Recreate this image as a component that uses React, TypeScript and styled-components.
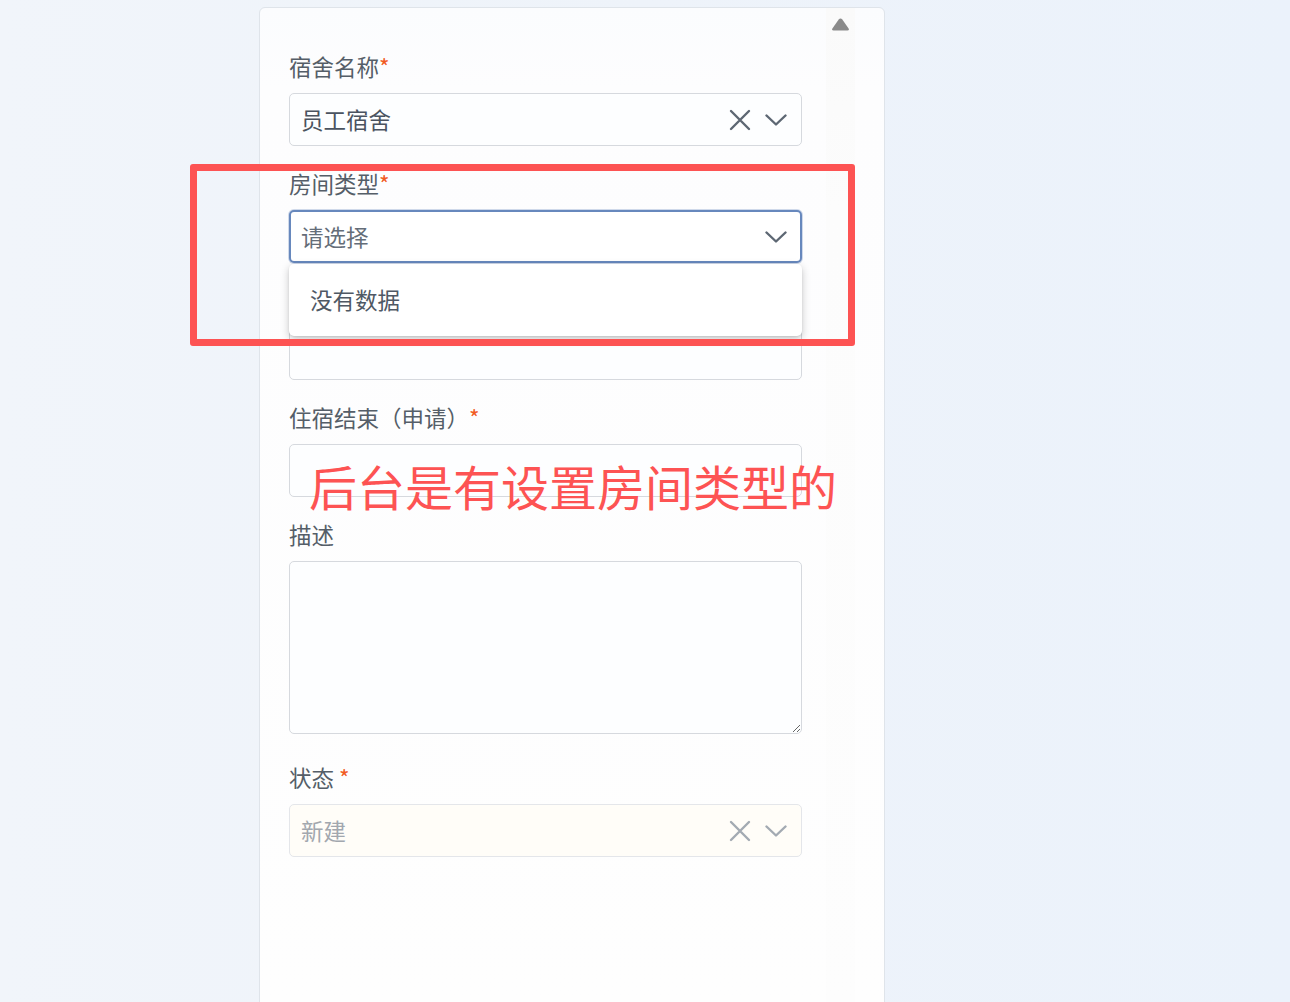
import React from "react";
import styled, { createGlobalStyle } from "styled-components";

const Global = createGlobalStyle`
  html, body { margin: 0; padding: 0; }
  body {
    background: linear-gradient(90deg, #f1f5fa 0%, #eef3fa 50%, #ebf2fb 100%);
    font-family: "Noto Sans CJK SC", "Noto Sans", sans-serif;
    height: 1002px;
    overflow: hidden;
  }
`;

const Page = styled.div`
  position: relative;
  padding: 7px 0 0 259px;
  height: 995px;
`;

const Card = styled.div`
  position: relative;
  box-sizing: border-box;
  width: 626px;
  min-height: 1010px;
  background: linear-gradient(180deg, #fbfcfe 0px, #fdfdfe 80px, #fefefe 100%);
  border: 1px solid #dfe4ea;
  border-radius: 6px;
  padding: 45px 0 0 29px;
`;

const ScrollTrack = styled.div`
  position: absolute;
  top: 0;
  right: 29px;
  width: 29px;
  height: 100%;
  background: linear-gradient(180deg, #fafafa 0px, #fcfcfc 200px, #fdfdfd 100%);
  display: flex;
  justify-content: center;
  padding-top: 9px;
  box-sizing: border-box;
`;

const Form = styled.div`
  width: 513px;
  display: flex;
  flex-direction: column;
`;

const Field = styled.div<{ $mb?: number }>`
  position: relative;
  display: flex;
  flex-direction: column;
  margin-bottom: ${(p) => p.$mb ?? 24}px;
`;

const Label = styled.div<{ $covered?: boolean }>`
  height: 30px;
  line-height: 27px;
  font-size: 22.5px;
  color: #555e68;
  margin-bottom: 10px;
  white-space: nowrap;
  visibility: ${(p) => (p.$covered ? "hidden" : "visible")};
`;

const Star = styled.span`
  color: #f15a22;
`;

const Select = styled.div<{ $focus?: boolean; $disabled?: boolean }>`
  box-sizing: border-box;
  height: 53px;
  display: flex;
  align-items: center;
  border-radius: 5px;
  border: ${(p) => (p.$focus ? "2px solid #6788bd" : "1px solid #d6d9de")};
  padding-left: ${(p) => (p.$focus ? 10 : 11)}px;
  padding-right: ${(p) => (p.$focus ? 13 : 14)}px;
  background: ${(p) => (p.$disabled ? "#fffdf8" : p.$focus ? "#ffffff" : "#fdfeff")};
  border-color: ${(p) => (p.$disabled ? "#e4e6ea" : undefined)};
  box-shadow: ${(p) => (p.$focus ? "0 0 0 1px rgba(103,136,189,0.3)" : "none")};
`;

const Value = styled.div<{ $tone?: "value" | "placeholder" | "disabled" }>`
  flex: 1;
  font-size: 22.5px;
  line-height: 30px;
  padding-bottom: 2px;
  color: ${(p) =>
    p.$tone === "placeholder" ? "#646d78" : p.$tone === "disabled" ? "#a2a7ae" : "#4a5360"};
`;

const Icons = styled.div`
  display: flex;
  align-items: center;
  gap: 14px;
`;

const Input = styled.div`
  box-sizing: border-box;
  height: 53px;
  border: 1px solid #d6d9de;
  border-radius: 5px;
  background: #fdfeff;
`;

const TextArea = styled.textarea`
  box-sizing: border-box;
  display: block;
  width: 513px;
  height: 173px;
  border: 1px solid #d6d9de;
  border-radius: 5px;
  background: #fdfeff;
  resize: vertical;
  font-family: inherit;
  font-size: 22px;
  margin: 0;
`;

const Dropdown = styled.div`
  position: absolute;
  left: 0;
  top: 94px;
  width: 513px;
  height: 72px;
  box-sizing: border-box;
  background: #ffffff;
  border-radius: 5px;
  box-shadow: 0 3px 8px rgba(0, 0, 0, 0.22), 0 1px 2px rgba(0, 0, 0, 0.08);
  display: flex;
  align-items: center;
  padding: 0 0 3px 21px;
  font-size: 22.5px;
  color: #4f5864;
  z-index: 5;
`;

const RedBox = styled.div`
  position: absolute;
  left: 190px;
  top: 164px;
  width: 665px;
  height: 182px;
  box-sizing: border-box;
  border: 7px solid #fd5353;
  border-radius: 3px;
  z-index: 10;
  pointer-events: none;
`;

const Annotation = styled.div`
  position: absolute;
  left: 309px;
  top: 461px;
  font-size: 48px;
  line-height: 48px;
  color: #fd5353;
  white-space: nowrap;
  z-index: 10;
`;

const Clear = ({ color }: { color: string }) => (
  <svg width="22" height="22" viewBox="0 0 22 22">
    <path d="M2 2 L20 20 M20 2 L2 20" stroke={color} strokeWidth="2.4" strokeLinecap="round" fill="none" />
  </svg>
);

const Chevron = ({ color }: { color: string }) => (
  <svg width="22" height="12" viewBox="0 0 22 12">
    <path d="M1.5 1.5 L11 10.5 L20.5 1.5" stroke={color} strokeWidth="2.4" strokeLinecap="round" strokeLinejoin="round" fill="none" />
  </svg>
);

const ScrollUp = () => (
  <svg width="19" height="15" viewBox="0 0 19 15">
    <path d="M9.5 1.5 Q10.5 1.5 11.3 2.6 L17.6 11.6 Q18.6 13.5 16.5 13.5 L2.5 13.5 Q0.4 13.5 1.4 11.6 L7.7 2.6 Q8.5 1.5 9.5 1.5 Z" fill="#8a8a8a" />
  </svg>
);

export default function App() {
  return (
    <>
      <Global />
      <Page>
        <Card>
          <ScrollTrack>
            <ScrollUp />
          </ScrollTrack>
          <Form>
            <Field>
              <Label>
                宿舍名称<Star>*</Star>
              </Label>
              <Select>
                <Value>员工宿舍</Value>
                <Icons>
                  <Clear color="#5d6773" />
                  <Chevron color="#5d6773" />
                </Icons>
              </Select>
            </Field>
            <Field>
              <Label>
                房间类型<Star>*</Star>
              </Label>
              <Select $focus>
                <Value $tone="placeholder">请选择</Value>
                <Icons>
                  <Chevron color="#5d6773" />
                </Icons>
              </Select>
              <Dropdown>没有数据</Dropdown>
            </Field>
            <Field>
              <Label $covered>
                住宿开始（申请）<Star>*</Star>
              </Label>
              <Input />
            </Field>
            <Field>
              <Label>
                住宿结束（申请）<Star>*</Star>
              </Label>
              <Input />
            </Field>
            <Field $mb={30}>
              <Label>描述</Label>
              <TextArea />
            </Field>
            <Field>
              <Label>
                状态 <Star>*</Star>
              </Label>
              <Select $disabled>
                <Value $tone="disabled">新建</Value>
                <Icons>
                  <Clear color="#a3aab2" />
                  <Chevron color="#a3aab2" />
                </Icons>
              </Select>
            </Field>
          </Form>
        </Card>
        <RedBox />
        <Annotation>后台是有设置房间类型的</Annotation>
      </Page>
    </>
  );
}
